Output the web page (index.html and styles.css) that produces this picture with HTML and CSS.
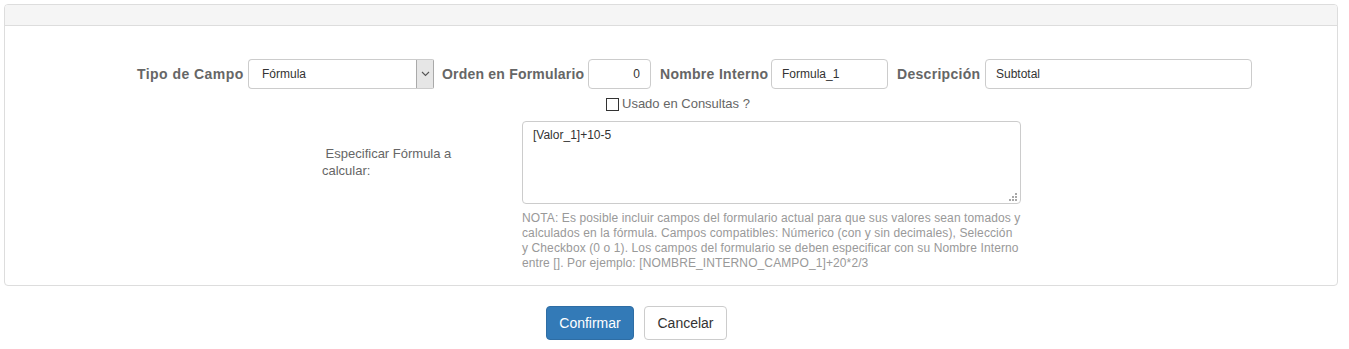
FILE: index.html
```html
<!DOCTYPE html>
<html lang="es">
<head>
<meta charset="utf-8">
<title>Campo Fórmula</title>
<link rel="stylesheet" href="styles.css">
</head>
<body>
<div class="page">
  <div class="panel">
    <div class="panel-heading"></div>
    <div class="panel-body">
      <div class="row-fields">
        <label class="lbl lbl-tipo">Tipo de Campo</label>
        <div class="select">
          <span class="select-value">Fórmula</span>
          <span class="select-arrow">
            <svg width="9" height="6" viewBox="0 0 9 6"><polyline points="1,1 4.5,4.5 8,1" fill="none" stroke="#555" stroke-width="1.1"/></svg>
          </span>
        </div>
        <label class="lbl lbl-orden">Orden en Formulario</label>
        <input class="input input-orden" type="text" value="0">
        <label class="lbl lbl-nombre">Nombre Interno</label>
        <input class="input input-nombre" type="text" value="Formula_1">
        <label class="lbl lbl-desc">Descripción</label>
        <input class="input input-desc" type="text" value="Subtotal">
      </div>
      <div class="row-check">
        <span class="check-box"></span>
        <span class="check-text">Usado en Consultas ?</span>
      </div>
      <div class="row-formula">
        <div class="formula-label">&nbsp;Especificar Fórmula a calcular:</div>
        <div class="textarea-wrap">
          <div class="textarea">[Valor_1]+10-5</div>
          <svg class="grip" width="9" height="9" viewBox="0 0 9 9">
            <rect x="6" y="0" width="2" height="2" fill="#a8a8a8"/>
            <rect x="3" y="3" width="2" height="2" fill="#a8a8a8"/>
            <rect x="6" y="3" width="2" height="2" fill="#a8a8a8"/>
            <rect x="0" y="6" width="2" height="2" fill="#a8a8a8"/>
            <rect x="3" y="6" width="2" height="2" fill="#a8a8a8"/>
            <rect x="6" y="6" width="2" height="2" fill="#a8a8a8"/>
          </svg>
        </div>
      </div>
      <p class="nota">NOTA: Es posible incluir campos del formulario actual para que sus valores sean tomados y calculados en la fórmula. Campos compatibles: Númerico (con y sin decimales), Selección y&nbsp;Checkbox (0 o 1). Los campos del formulario se deben especificar con su Nombre Interno entre []. Por ejemplo: [NOMBRE_INTERNO_CAMPO_1]+20*2/3</p>
    </div>
  </div>
  <div class="actions">
    <button class="btn btn-primary" type="button">Confirmar</button>
    <button class="btn btn-default" type="button">Cancelar</button>
  </div>
</div>
</body>
</html>
```

FILE: styles.css
```css
* { box-sizing: border-box; }

html, body {
  margin: 0;
  padding: 0;
  background: #fff;
  font-family: "Liberation Sans", Arial, sans-serif;
  color: #333;
}

.page {
  padding-top: 4px;
}

.panel {
  margin-left: 4px;
  width: 1334px;
  border: 1px solid #ddd;
  border-radius: 4px;
  background: #fff;
}

.panel-heading {
  height: 21px;
  background: #f5f5f5;
  border-bottom: 1px solid #ddd;
  border-radius: 3px 3px 0 0;
}

.panel-body {
  padding: 33px 0 14px 0;
}

.row-fields {
  display: flex;
  align-items: center;
  padding-left: 132px;
  height: 30px;
}

.lbl {
  flex: none;
  font-size: 14px;
  font-weight: bold;
  color: #666;
  white-space: nowrap;
  margin-right: 5px;
}

.lbl-tipo { width: 106px; letter-spacing: 0.45px; }
.lbl-orden { width: 141px; margin-left: 8px; letter-spacing: 0.2px; }
.lbl-nombre { width: 106px; margin-left: 9px; letter-spacing: 0.3px; }
.lbl-desc { width: 83px; margin-left: 9px; letter-spacing: 0.3px; }

.select {
  flex: none;
  display: flex;
  width: 186px;
  height: 30px;
  border: 1px solid #ccc;
  border-right-color: #a9a9a9;
  border-radius: 4px 2px 2px 4px;
  background: #fff;
}

.select-value {
  flex: 1;
  font-size: 12px;
  line-height: 28px;
  padding-left: 13px;
  color: #333;
}

.select-arrow {
  width: 17px;
  display: flex;
  align-items: center;
  justify-content: center;
  background: #e6e6e6;
  border-left: 1px solid #aaa;
}

.input {
  flex: none;
  height: 30px;
  border: 1px solid #ccc;
  border-radius: 4px;
  font-family: "Liberation Sans", Arial, sans-serif;
  font-size: 12px;
  color: #333;
  padding: 0 10px;
  margin: 0;
  outline: none;
}

.input-orden {
  width: 63px;
  text-align: right;
}

.input-nombre {
  width: 117px;
}

.input-desc {
  width: 267px;
}

.row-check {
  display: flex;
  align-items: center;
  height: 14px;
  margin-top: 8px;
  padding-left: 601px;
}

.check-box {
  width: 13px;
  height: 13px;
  border: 1px solid #333;
  background: #fff;
  margin-right: 3px;
}

.check-text {
  font-size: 13px;
  line-height: 14px;
  color: #666;
}

.row-formula {
  display: flex;
  margin-top: 10px;
  padding-left: 317px;
}

.formula-label {
  width: 200px;
  padding-top: 24px;
  padding-right: 60px;
  font-size: 13px;
  line-height: 17px;
  color: #666;
}

.textarea-wrap {
  position: relative;
  width: 499px;
  height: 83px;
}

.textarea {
  width: 100%;
  height: 100%;
  border: 1px solid #ccc;
  border-radius: 4px;
  font-size: 12px;
  line-height: 16px;
  padding: 5px 10px;
  color: #333;
}

.grip {
  position: absolute;
  right: 3px;
  bottom: 2px;
}

.nota {
  margin: 7px 0 0 517px;
  width: 502px;
  font-size: 12px;
  line-height: 15px;
  letter-spacing: 0.11px;
  color: #999;
}

.actions {
  display: flex;
  gap: 10px;
  margin-top: 20px;
  padding-left: 546px;
}

.btn {
  height: 34px;
  padding: 0 12px;
  font-family: "Liberation Sans", Arial, sans-serif;
  font-size: 14px;
  border-radius: 4px;
  border: 1px solid transparent;
  cursor: pointer;
}

.btn-primary {
  width: 88px;
  background: #337ab7;
  border-color: #2e6da4;
  color: #fff;
}

.btn-default {
  width: 83px;
  background: #fff;
  border-color: #ccc;
  color: #333;
}
```
